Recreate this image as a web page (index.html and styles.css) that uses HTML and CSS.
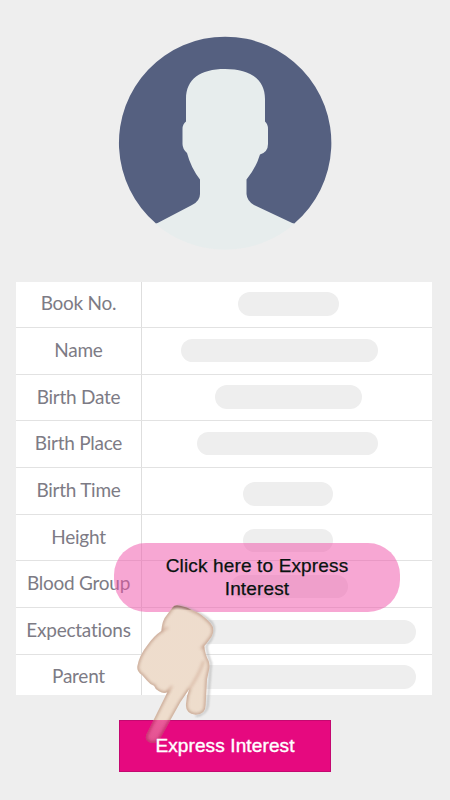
FILE: index.html
```
<!DOCTYPE html>
<html lang="en">
<head>
<meta charset="utf-8">
<title>Express Interest</title>
<link rel="stylesheet" href="styles.css">
</head>
<body>
<main class="screen">
  <svg class="avatar" viewBox="0 0 212 213" aria-hidden="true">
    <path fill="#556080" d="M37 186.500A106.200 106.200 0 1 1 175.300 186.500Z"/>
    <path fill="#e7eded" d="M67 62C67 42 81 32 106 32S146 42 146 62V84.500Q149 87 149 92V107Q149 115 141 117.500Q137 131 127.500 142.500V157Q128 164 135 168L175.300 187A106.300 106.300 0 0 1 36.700 187L73 168Q81 164 81 157V142.500Q72 131 68 116Q63.500 112 63.500 107V92Q63.500 87 67 84.500Z"/>
  </svg>
  <section class="profile">
    <div class="row"><span class="label">Book No.</span><span class="value"><i class="bar w-book"></i></span></div>
    <div class="row"><span class="label">Name</span><span class="value"><i class="bar w-name"></i></span></div>
    <div class="row"><span class="label">Birth Date</span><span class="value"><i class="bar w-date"></i></span></div>
    <div class="row"><span class="label">Birth Place</span><span class="value"><i class="bar w-place"></i></span></div>
    <div class="row"><span class="label">Birth Time</span><span class="value"><i class="bar w-time"></i></span></div>
    <div class="row"><span class="label">Height</span><span class="value"><i class="bar w-height"></i></span></div>
    <div class="row"><span class="label">Blood Group</span><span class="value"><i class="bar w-blood"></i></span></div>
    <div class="row"><span class="label">Expectations</span><span class="value"><i class="bar w-expect"></i></span></div>
    <div class="row"><span class="label">Parent</span><span class="value"><i class="bar w-parent"></i></span></div>
  </section>
  <button class="cta"><span class="cta-text">Express Interest</span></button>
  <div class="tooltip">Click here to Express<br>Interest</div>
  <svg class="hand" viewBox="0 0 360 480" aria-hidden="true">
    <defs>
      <clipPath id="shape"><path id="outline" d="M188 37Q194 28 210 32Q230 35 252 48Q276 56 302 85Q313 98 309 114Q306 126 298 134Q292 143 283 153Q285 178 296 198Q300 209 298 221L291 253L287 330Q287 359 257 359Q225 356 228 326Q229 303 238 282Q222 305 211 322L150 431Q141 446 123 444Q104 439 108 421L172 292Q160 297 147 289Q136 284 132 272Q119 268 110 256Q102 246 96 240Q80 229 82 214Q88 181 112 151Q132 122 154 108Q156 75 171 59Z"/></clipPath>
      <linearGradient id="skin" x1="0" x2="0" y1="0" y2="480" gradientUnits="userSpaceOnUse">
        <stop offset="0" stop-color="#eedccd"/><stop offset=".78" stop-color="#eeddcc"/><stop offset=".782" stop-color="#ea5c9a"/><stop offset="1" stop-color="#e04c8c"/>
      </linearGradient>
      <filter id="soft" x="-10%" y="-10%" width="120%" height="120%"><feGaussianBlur stdDeviation="5"/></filter>
      <filter id="shade" x="-10%" y="-10%" width="120%" height="120%"><feGaussianBlur stdDeviation="3"/></filter>
      <clipPath id="above"><rect width="360" height="375"/></clipPath>
      <clipPath id="below"><rect y="375" width="360" height="105"/></clipPath>
    </defs>
    <path class="hand-shadow" filter="url(#shade)" d="M205 31Q275 50 306 83Q319 102 303 135L289 153Q294 185 303 204L293 333Q289 360 257 363"/>
    <use href="#outline" fill="url(#skin)"/>
    <g clip-path="url(#shape)">
      <g clip-path="url(#above)"><use class="hand-edge" href="#outline" filter="url(#soft)"/></g>
      <g clip-path="url(#below)"><use class="tip-edge" href="#outline" filter="url(#soft)"/></g>
      <path class="hand-crease" filter="url(#soft)" d="M154 108L174 98M283 153L272 161M281 198Q267 240 238 282M172 292L186 273"/>
      <path class="hand-cuff" filter="url(#soft)" d="M183 36Q205 26 245 42"/>
    </g>
  </svg>
</main>
</body>
</html>
```
FILE: styles.css
```
* { box-sizing: border-box; }
body { margin: 0; background: #eee; }
.screen {
  position: relative;
  width: 450px;
  height: 800px;
  overflow: hidden;
  display: flex;
  flex-direction: column;
  align-items: center;
  padding-top: 37px;
  font-family: "Liberation Sans", sans-serif;
}
.avatar { width: 212px; height: 213px; flex: none; overflow: visible; }
.profile {
  width: 416px;
  height: 413px;
  margin: 31.5px 2px 0 0;
  flex: none;
  overflow: hidden;
  background: #fff;
}
.row {
  display: grid;
  grid-template-columns: 126px 1fr;
  height: 46.65px;
  border-bottom: 1.5px solid #e2e2e2;
}
.label {
  display: flex;
  align-items: center;
  justify-content: center;
  padding-bottom: 3px;
  border-right: 1px solid #dedede;
  font: 19px Lato, sans-serif;
  font-variant-ligatures: none;
  letter-spacing: -.25px;
  color: #7d7b85;
  white-space: nowrap;
}
.value { display: flex; justify-content: center; padding-top: 10.5px; }
.bar { height: 23.5px; border-radius: 12px; background: #eee; }
.w-book { width: 101px; margin-left: 3px; }
.w-name { width: 197px; margin-right: 16px; }
.w-date { width: 147px; margin-left: 3px; }
.w-place { width: 181px; margin-left: 1px; }
.w-time, .w-height { width: 90px; margin-left: 2px; margin-top: 3.5px; }
.w-blood { width: 117px; margin-left: 5px; margin-top: 3px; }
.w-expect { width: 251px; margin-left: 7px; margin-top: 2px; }
.w-parent { width: 251px; margin-left: 7px; }
.cta {
  width: 212px;
  height: 52px;
  margin-top: 25.5px;
  flex: none;
  padding: 0;
  border: 1px solid #c40870;
  background: #e6097f;
  color: #fff;
  font: 19px "Liberation Sans", sans-serif;
  letter-spacing: .12px;
  -webkit-text-stroke: .4px #fff;
}
.cta-text { position: relative; z-index: 3; }
.tooltip {
  position: absolute;
  left: 114px;
  top: 543px;
  width: 286px;
  height: 69px;
  padding-top: 11px;
  border-radius: 32px;
  background: rgba(240, 80, 167, .5);
  color: #08130f;
  font-size: 19px;
  line-height: 23px;
  letter-spacing: .15px;
  text-align: center;
  -webkit-text-stroke: .25px #08130f;
}
.hand { position: absolute; left: 110px; top: 595px; width: 120px; height: 160px; z-index: 2; }
.hand-shadow { fill: none; stroke: #999; stroke-width: 5; opacity: .65; }
.hand-edge { fill: none; stroke: #b08672; stroke-width: 9; opacity: .65; }
.tip-edge { fill: none; stroke: #b8205f; stroke-width: 10; opacity: .75; }
.hand-crease { fill: none; stroke: #bd8d76; stroke-width: 6; opacity: .5; }
.hand-cuff { fill: none; stroke: #65383f; stroke-width: 10; opacity: .7; }
```
